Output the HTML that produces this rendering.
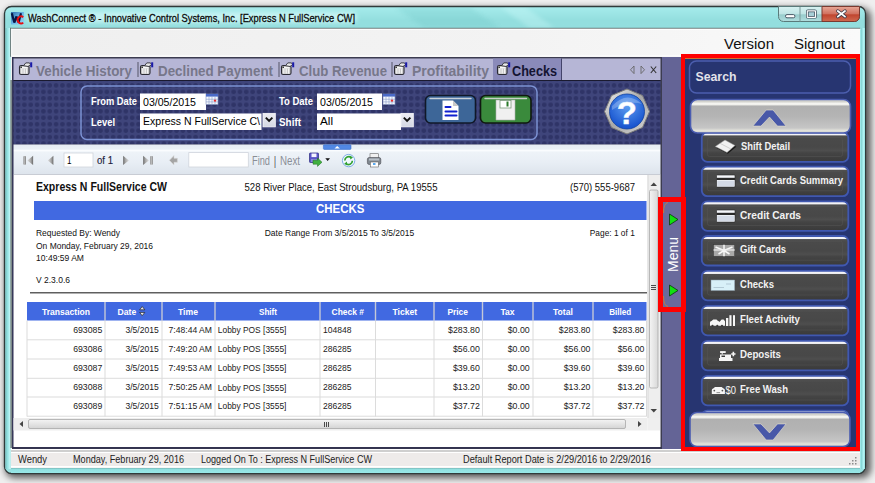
<!DOCTYPE html>
<html><head><meta charset="utf-8"><title>WashConnect</title>
<style>html,body{margin:0;padding:0;background:#ececec;width:875px;height:483px;overflow:hidden;font-family:"Liberation Sans",sans-serif}svg{display:block}</style>
</head><body><svg width="875" height="483" viewBox="0 0 875 483" font-family="Liberation Sans, sans-serif"><defs>
<linearGradient id="bgshadow" x1="0" y1="0" x2="0" y2="1"><stop offset="0" stop-color="#f2f2f2"/><stop offset="1" stop-color="#e6e6e6"/></linearGradient>
<clipPath id="titleclip"><rect x="5" y="7.5" width="860" height="20.5"/></clipPath>
<linearGradient id="menubg" x1="0" y1="0" x2="1" y2="0"><stop offset="0" stop-color="#efefef"/><stop offset="0.6" stop-color="#f3f3f3"/><stop offset="1" stop-color="#fafafa"/></linearGradient>
<filter id="glow" x="-10%" y="-50%" width="120%" height="200%"><feGaussianBlur stdDeviation="2"/></filter>
<filter id="shadow" x="-5%" y="-5%" width="110%" height="110%"><feGaussianBlur stdDeviation="3.5"/></filter>
<linearGradient id="leftframe" x1="0" y1="0" x2="1" y2="0"><stop offset="0" stop-color="#78b0b0"/><stop offset="0.3" stop-color="#8adcdc"/><stop offset="0.6" stop-color="#a8ecec"/><stop offset="0.85" stop-color="#c8f8f8"/><stop offset="1" stop-color="#b0e0e0"/></linearGradient>
<linearGradient id="rightframe" x1="0" y1="0" x2="1" y2="0"><stop offset="0" stop-color="#a8f0f0"/><stop offset="0.3" stop-color="#88d8d8"/><stop offset="0.7" stop-color="#b0f4f4"/><stop offset="1" stop-color="#98e0e0"/></linearGradient>
<linearGradient id="bottomframe" x1="0" y1="0" x2="0" y2="1"><stop offset="0" stop-color="#7ab8b8"/><stop offset="0.3" stop-color="#90e0e0"/><stop offset="1" stop-color="#98e8e8"/></linearGradient>
<linearGradient id="cyan" x1="0" y1="0" x2="0" y2="1"><stop offset="0" stop-color="#a6ecec"/><stop offset="0.03" stop-color="#93dede"/><stop offset="1" stop-color="#98e2e2"/></linearGradient>
<pattern id="dots" x="14.89" y="82.165" width="6.34" height="6.47" patternUnits="userSpaceOnUse"><rect width="6.34" height="6.47" fill="#3f457b"/><circle cx="3.17" cy="3.235" r="2.3" fill="#2f3467"/></pattern>
<linearGradient id="toolbar" x1="0" y1="0" x2="0" y2="1"><stop offset="0" stop-color="#e6ecf4"/><stop offset="0.15" stop-color="#eaf0f6"/><stop offset="0.2" stop-color="#fafcfe"/><stop offset="0.26" stop-color="#eef3f8"/><stop offset="0.6" stop-color="#e8eef5"/><stop offset="1" stop-color="#dde4ec"/></linearGradient>
<linearGradient id="graybtn" x1="0" y1="0" x2="0" y2="1"><stop offset="0" stop-color="#d8d8d0"/><stop offset="0.08" stop-color="#d0d0cc"/><stop offset="0.1" stop-color="#f6f6f2"/><stop offset="0.15" stop-color="#f0f0ec"/><stop offset="0.2" stop-color="#b0b0b0"/><stop offset="0.5" stop-color="#b4b4b4"/><stop offset="0.85" stop-color="#c6c6c6"/><stop offset="0.93" stop-color="#e4e4dc"/><stop offset="1" stop-color="#c8c8c8"/></linearGradient>
<linearGradient id="darkbtn" x1="0" y1="0" x2="0" y2="1"><stop offset="0" stop-color="#ffffff"/><stop offset="0.08" stop-color="#f0f0f0"/><stop offset="0.12" stop-color="#3a3a3a"/><stop offset="0.55" stop-color="#474747"/><stop offset="0.6" stop-color="#3b3b3b"/><stop offset="1" stop-color="#3a3a3a"/></linearGradient>
<linearGradient id="closebtn" x1="0" y1="0" x2="0" y2="1"><stop offset="0" stop-color="#e8a898"/><stop offset="0.5" stop-color="#d0705e"/><stop offset="0.55" stop-color="#c0452e"/><stop offset="1" stop-color="#d06a50"/></linearGradient>
<linearGradient id="capbtn" x1="0" y1="0" x2="0" y2="1"><stop offset="0" stop-color="#d8f2f2"/><stop offset="0.5" stop-color="#bfe4e4"/><stop offset="0.55" stop-color="#98cccc"/><stop offset="1" stop-color="#b0dede"/></linearGradient>
<linearGradient id="bluebtn" x1="0" y1="0" x2="0" y2="1"><stop offset="0" stop-color="#6a8cc0"/><stop offset="0.5" stop-color="#4a6ea6"/><stop offset="1" stop-color="#3a5a90"/></linearGradient>
<linearGradient id="greenbtn" x1="0" y1="0" x2="0" y2="1"><stop offset="0" stop-color="#7ab87a"/><stop offset="0.5" stop-color="#4a9a4a"/><stop offset="1" stop-color="#3a8a3a"/></linearGradient>
<linearGradient id="scrollthumbV" x1="0" y1="0" x2="1" y2="0"><stop offset="0" stop-color="#f4f4f4"/><stop offset="1" stop-color="#d8d8d8"/></linearGradient>
<linearGradient id="scrollthumbH" x1="0" y1="0" x2="0" y2="1"><stop offset="0" stop-color="#f4f4f4"/><stop offset="1" stop-color="#d4d4d4"/></linearGradient>
<radialGradient id="helpblue" cx="0.5" cy="0.35" r="0.6"><stop offset="0" stop-color="#5c9cf0"/><stop offset="1" stop-color="#1a56d0"/></radialGradient>
<linearGradient id="silver" x1="0" y1="0" x2="1" y2="1"><stop offset="0" stop-color="#f0f0f0"/><stop offset="0.5" stop-color="#a8a8a8"/><stop offset="1" stop-color="#d8d8d8"/></linearGradient>
<linearGradient id="icog" x1="0" y1="0" x2="1" y2="1"><stop offset="0" stop-color="#2a6aa8"/><stop offset="0.5" stop-color="#6ab8e8"/><stop offset="1" stop-color="#9ad8f4"/></linearGradient><linearGradient id="ddg" x1="0" y1="0" x2="0" y2="1"><stop offset="0" stop-color="#ececf2"/><stop offset="1" stop-color="#d4d8e4"/></linearGradient><linearGradient id="navg" x1="0" y1="0" x2="1" y2="0"><stop offset="0" stop-color="#dcdcdc"/><stop offset="0.6" stop-color="#a8a8a8"/><stop offset="1" stop-color="#6a6a6a"/></linearGradient><linearGradient id="navgr" x1="1" y1="0" x2="0" y2="0"><stop offset="0" stop-color="#dcdcdc"/><stop offset="0.6" stop-color="#a8a8a8"/><stop offset="1" stop-color="#6a6a6a"/></linearGradient><linearGradient id="navbar" x1="0" y1="0" x2="1" y2="0"><stop offset="0" stop-color="#8a8a8a"/><stop offset="0.5" stop-color="#b8b8b8"/><stop offset="1" stop-color="#7a7a7a"/></linearGradient><linearGradient id="dkb" x1="0" y1="0" x2="0" y2="1"><stop offset="0" stop-color="#f0f0f4"/><stop offset="0.09" stop-color="#f4f4f8"/><stop offset="0.12" stop-color="#505050"/><stop offset="0.2" stop-color="#4a4a4a"/><stop offset="0.5" stop-color="#484848"/><stop offset="0.62" stop-color="#4e4e4e"/><stop offset="0.7" stop-color="#444"/><stop offset="1" stop-color="#3a3a3a"/></linearGradient></defs><rect x="0" y="0" width="875" height="483" fill="#efefef" /><rect x="5" y="8" width="866" height="470" rx="9" fill="#000" filter="url(#shadow)" opacity="0.62"/><rect x="4.5" y="6.5" width="861" height="467" rx="7" fill="url(#cyan)" stroke="#303a3a" stroke-width="1.3"/><g clip-path="url(#titleclip)"><path d="M395 7 L470 7 L500 28 L425 28 Z" fill="#5ab8b8" opacity="0.18" filter="url(#glow)"/><path d="M500 7 L525 7 L555 28 L530 28 Z" fill="#d8ffff" opacity="0.3" filter="url(#glow)"/></g><rect x="5.2" y="28" width="5.8" height="441" fill="url(#leftframe)"/><rect x="860" y="28" width="5" height="441" fill="url(#rightframe)"/><rect x="11" y="468" width="849" height="5" fill="url(#bottomframe)"/><rect x="11" y="12" width="13" height="12.5" fill="url(#icog)"/><path d="M11.8 13.2 L14.3 22.5 L16.5 16.5 L18.6 22.5 L21 13.2" stroke="#061848" stroke-width="2.2" fill="none" stroke-linejoin="bevel"/><path d="M23.2 17.2 A3.3 3.6 0 1 0 23.2 22.6" stroke="#e81010" stroke-width="2" fill="none"/><rect x="27" y="12" width="330" height="11" rx="5" fill="#e8ffff" opacity="0.55" filter="url(#glow)"/><text x="28" y="21.5" font-size="11.2" font-weight="400" fill="#0a0a0a" text-anchor="start" textLength="327" lengthAdjust="spacingAndGlyphs" stroke="#0a0a0a" stroke-width="0.3">WashConnect ® - Innovative Control Systems, Inc. [Express N FullService CW]</text><path d="M778.5 6.5 h81 v10 a5 5 0 0 1 -5 5 h-71 a5 5 0 0 1 -5 -5 z" fill="url(#capbtn)" stroke="#5a7a7a" stroke-width="1"/><path d="M822 6.5 h37.5 v10 a5 5 0 0 1 -5 5 h-32.5 z" fill="url(#closebtn)" stroke="#7a3a30" stroke-width="1"/><line x1="800" y1="7" x2="800" y2="21.5" stroke="#7a9a9a" stroke-width="1"/><rect x="785.5" y="14.6" width="9.4" height="3.2" rx="1.5" fill="#fff" stroke="#3a4a58" stroke-width="0.9"/><rect x="807.3" y="10.9" width="8.2" height="6.4" rx="0.6" fill="#a8d0d8" stroke="#3a4a58" stroke-width="2.6"/><rect x="807.3" y="10.9" width="8.2" height="6.4" rx="0.4" fill="none" stroke="#fff" stroke-width="1.2"/><path d="M837.8 11 L845 16.6 M845 11 L837.8 16.6" stroke="#3a3a4a" stroke-width="3.4" stroke-linecap="round"/><path d="M837.8 11 L845 16.6 M845 11 L837.8 16.6" stroke="#fff" stroke-width="1.8" stroke-linecap="round"/><rect x="11" y="28" width="849" height="440" fill="#f0f0f0" /><rect x="11" y="28" width="849" height="28" fill="url(#menubg)" /><rect x="10.2" y="27.8" width="850" height="1" fill="#5e6a6a" /><rect x="10.2" y="27.8" width="1" height="29" fill="#5e6a6a" /><rect x="11.2" y="28.8" width="849" height="1" fill="#ffffff" /><rect x="11.2" y="28.8" width="1" height="27" fill="#ffffff" /><text x="724" y="48.5" font-size="14" font-weight="400" fill="#111" text-anchor="start" textLength="50" lengthAdjust="spacingAndGlyphs" >Version</text><text x="794" y="48.5" font-size="14" font-weight="400" fill="#111" text-anchor="start" textLength="51" lengthAdjust="spacingAndGlyphs" >Signout</text><rect x="11" y="448.5" width="849" height="19.5" fill="#eeebea" /><rect x="11" y="448.5" width="849" height="1.5" fill="#ffffff" /><rect x="11" y="450" width="849" height="2" fill="#cfcfcf" /><rect x="11" y="452" width="849" height="1" fill="#ffffff" /><rect x="11" y="466" width="849" height="1.5" fill="#ffffff" /><text x="18" y="463" font-size="10" font-weight="400" fill="#222" text-anchor="start" textLength="29" lengthAdjust="spacingAndGlyphs" >Wendy</text><text x="73" y="463" font-size="10" font-weight="400" fill="#222" text-anchor="start" textLength="111" lengthAdjust="spacingAndGlyphs" >Monday, February 29, 2016</text><text x="201" y="463" font-size="10" font-weight="400" fill="#222" text-anchor="start" textLength="171" lengthAdjust="spacingAndGlyphs" >Logged On To : Express N FullService CW</text><text x="463" y="463" font-size="10" font-weight="400" fill="#222" text-anchor="start" textLength="188" lengthAdjust="spacingAndGlyphs" >Default Report Date is 2/29/2016 to 2/29/2016</text><rect x="855" y="457" width="1.5" height="1.5" fill="#8a8a8a" /><rect x="852" y="460" width="1.5" height="1.5" fill="#8a8a8a" /><rect x="855" y="460" width="1.5" height="1.5" fill="#8a8a8a" /><rect x="849" y="463" width="1.5" height="1.5" fill="#8a8a8a" /><rect x="852" y="463" width="1.5" height="1.5" fill="#8a8a8a" /><rect x="855" y="463" width="1.5" height="1.5" fill="#8a8a8a" /><rect x="12" y="57" width="650" height="392" fill="#3c3c50" /><rect x="10.3" y="80" width="2" height="368" fill="#7e8a8a" /><rect x="12.3" y="57" width="1.5" height="391" fill="#2e2e56" /><rect x="13.5" y="58.5" width="647" height="21.5" fill="#b6b6d6" /><rect x="493" y="58.5" width="68" height="21.5" fill="#8a8aba" /><rect x="561" y="58.5" width="1" height="21.5" fill="#44446a" /><g transform="translate(19,63.5)"><rect x="0.5" y="2" width="9.5" height="9" rx="1.6" fill="#c8c8c8" stroke="#2a2a34" stroke-width="1.1"/><path d="M2 4.2 h6.5" stroke="#f8f8f8" stroke-width="1.4"/><path d="M2.8 5 v5 M5.2 5 v5 M7.6 5 v5" stroke="#f4f4f4" stroke-width="1.2"/><circle cx="2.2" cy="3.8" r="0.8" fill="#111"/><path d="M4.5 2.2 L6.8 -0.6 H10.5 L11.5 1.2 L9 3 Z" fill="#e8e8e8" stroke="#303038" stroke-width="0.9"/><rect x="11.2" y="-1.2" width="2" height="5" fill="#1a1aa8"/></g><text x="36" y="75.5" font-size="14" font-weight="700" fill="#77778a" text-anchor="start" textLength="96" lengthAdjust="spacingAndGlyphs" >Vehicle History</text><rect x="137.5" y="62" width="1" height="15" fill="#555566" /><g transform="translate(140,63.5)"><rect x="0.5" y="2" width="9.5" height="9" rx="1.6" fill="#c8c8c8" stroke="#2a2a34" stroke-width="1.1"/><path d="M2 4.2 h6.5" stroke="#f8f8f8" stroke-width="1.4"/><path d="M2.8 5 v5 M5.2 5 v5 M7.6 5 v5" stroke="#f4f4f4" stroke-width="1.2"/><circle cx="2.2" cy="3.8" r="0.8" fill="#111"/><path d="M4.5 2.2 L6.8 -0.6 H10.5 L11.5 1.2 L9 3 Z" fill="#e8e8e8" stroke="#303038" stroke-width="0.9"/><rect x="11.2" y="-1.2" width="2" height="5" fill="#1a1aa8"/></g><text x="158" y="75.5" font-size="14" font-weight="700" fill="#77778a" text-anchor="start" textLength="115" lengthAdjust="spacingAndGlyphs" >Declined Payment</text><rect x="278.5" y="62" width="1" height="15" fill="#555566" /><g transform="translate(281,63.5)"><rect x="0.5" y="2" width="9.5" height="9" rx="1.6" fill="#c8c8c8" stroke="#2a2a34" stroke-width="1.1"/><path d="M2 4.2 h6.5" stroke="#f8f8f8" stroke-width="1.4"/><path d="M2.8 5 v5 M5.2 5 v5 M7.6 5 v5" stroke="#f4f4f4" stroke-width="1.2"/><circle cx="2.2" cy="3.8" r="0.8" fill="#111"/><path d="M4.5 2.2 L6.8 -0.6 H10.5 L11.5 1.2 L9 3 Z" fill="#e8e8e8" stroke="#303038" stroke-width="0.9"/><rect x="11.2" y="-1.2" width="2" height="5" fill="#1a1aa8"/></g><text x="299" y="75.5" font-size="14" font-weight="700" fill="#77778a" text-anchor="start" textLength="88" lengthAdjust="spacingAndGlyphs" >Club Revenue</text><rect x="391.5" y="62" width="1" height="15" fill="#555566" /><g transform="translate(394,63.5)"><rect x="0.5" y="2" width="9.5" height="9" rx="1.6" fill="#c8c8c8" stroke="#2a2a34" stroke-width="1.1"/><path d="M2 4.2 h6.5" stroke="#f8f8f8" stroke-width="1.4"/><path d="M2.8 5 v5 M5.2 5 v5 M7.6 5 v5" stroke="#f4f4f4" stroke-width="1.2"/><circle cx="2.2" cy="3.8" r="0.8" fill="#111"/><path d="M4.5 2.2 L6.8 -0.6 H10.5 L11.5 1.2 L9 3 Z" fill="#e8e8e8" stroke="#303038" stroke-width="0.9"/><rect x="11.2" y="-1.2" width="2" height="5" fill="#1a1aa8"/></g><text x="412" y="75.5" font-size="14" font-weight="700" fill="#77778a" text-anchor="start" textLength="77" lengthAdjust="spacingAndGlyphs" >Profitability</text><g transform="translate(497,63.5)"><rect x="0.5" y="2" width="9.5" height="9" rx="1.6" fill="#c8c8c8" stroke="#2a2a34" stroke-width="1.1"/><path d="M2 4.2 h6.5" stroke="#f8f8f8" stroke-width="1.4"/><path d="M2.8 5 v5 M5.2 5 v5 M7.6 5 v5" stroke="#f4f4f4" stroke-width="1.2"/><circle cx="2.2" cy="3.8" r="0.8" fill="#111"/><path d="M4.5 2.2 L6.8 -0.6 H10.5 L11.5 1.2 L9 3 Z" fill="#e8e8e8" stroke="#303038" stroke-width="0.9"/><rect x="11.2" y="-1.2" width="2" height="5" fill="#1a1aa8"/></g><text x="512" y="75.5" font-size="14" font-weight="700" fill="#141432" text-anchor="start" textLength="45" lengthAdjust="spacingAndGlyphs" >Checks</text><path d="M634 66 L630.5 69.8 L634 73.6 Z" fill="none" stroke="#666" stroke-width="0.9"/><path d="M641 66 L644.5 69.8 L641 73.6 Z" fill="none" stroke="#666" stroke-width="0.9"/><path d="M650.8 66.5 L656.2 73 M656.2 66.5 L650.8 73" stroke="#333" stroke-width="1.1"/><rect x="11" y="55.5" width="849" height="1" fill="#ffffff" /><rect x="13.5" y="80" width="647" height="1" fill="#1a1a30" /><rect x="13.5" y="81" width="647" height="63.5" fill="url(#dots)" /><rect x="81" y="86" width="456" height="53.5" rx="6" fill="none" stroke="#7c92d4" stroke-width="1.5"/><text x="91" y="105" font-size="11" font-weight="700" fill="#fff" text-anchor="start" textLength="46" lengthAdjust="spacingAndGlyphs" >From Date</text><text x="91" y="125.5" font-size="11" font-weight="700" fill="#fff" text-anchor="start" textLength="24" lengthAdjust="spacingAndGlyphs" >Level</text><text x="279" y="105" font-size="11" font-weight="700" fill="#fff" text-anchor="start" textLength="34" lengthAdjust="spacingAndGlyphs" >To Date</text><text x="279" y="125.5" font-size="11" font-weight="700" fill="#fff" text-anchor="start" textLength="22" lengthAdjust="spacingAndGlyphs" >Shift</text><rect x="140" y="93.5" width="66" height="16.5" fill="#fff" /><text x="143" y="105.6" font-size="11.5" font-weight="400" fill="#000" text-anchor="start" textLength="53" lengthAdjust="spacingAndGlyphs" >03/05/2015</text><rect x="140" y="113.5" width="121.5" height="16.5" fill="#fff" /><text x="143" y="125.2" font-size="11.5" font-weight="400" fill="#000" text-anchor="start" textLength="117" lengthAdjust="spacingAndGlyphs" >Express N FullService C\</text><rect x="317" y="93.5" width="65" height="16.5" fill="#fff" /><text x="320" y="105.6" font-size="11.5" font-weight="400" fill="#000" text-anchor="start" textLength="53" lengthAdjust="spacingAndGlyphs" >03/05/2015</text><rect x="317" y="113.5" width="84" height="16.5" fill="#fff" /><text x="320" y="125.2" font-size="11.5" font-weight="400" fill="#000" text-anchor="start" textLength="13" lengthAdjust="spacingAndGlyphs" >All</text><rect x="263.0" y="113.4" width="12.3" height="13.4" fill="url(#ddg)" stroke="#f4f4f8" stroke-width="0.9"/><path d="M265.8 117.60000000000001 L269.1 121.0 L272.4 117.60000000000001" fill="none" stroke="#111" stroke-width="1.9"/><rect x="401.0" y="113.4" width="12.3" height="13.4" fill="url(#ddg)" stroke="#f4f4f8" stroke-width="0.9"/><path d="M403.8 117.60000000000001 L407.1 121.0 L410.4 117.60000000000001" fill="none" stroke="#111" stroke-width="1.9"/><rect x="206" y="94" width="12" height="10.5" fill="#f4f8ff" stroke="#7a8ab8" stroke-width="0.6"/><rect x="206" y="94" width="12" height="2.6" fill="#4a6ac8"/><line x1="209" y1="96.6" x2="209" y2="104.5" stroke="#8a9ac8" stroke-width="0.6"/><line x1="212" y1="96.6" x2="212" y2="104.5" stroke="#8a9ac8" stroke-width="0.6"/><line x1="215" y1="96.6" x2="215" y2="104.5" stroke="#8a9ac8" stroke-width="0.6"/><line x1="206" y1="99.25" x2="218" y2="99.25" stroke="#8a9ac8" stroke-width="0.6"/><line x1="206" y1="101.89999999999999" x2="218" y2="101.89999999999999" stroke="#8a9ac8" stroke-width="0.6"/><circle cx="215" cy="100.6" r="1.2" fill="#e83030"/><rect x="383" y="94" width="12" height="10.5" fill="#f4f8ff" stroke="#7a8ab8" stroke-width="0.6"/><rect x="383" y="94" width="12" height="2.6" fill="#4a6ac8"/><line x1="386" y1="96.6" x2="386" y2="104.5" stroke="#8a9ac8" stroke-width="0.6"/><line x1="389" y1="96.6" x2="389" y2="104.5" stroke="#8a9ac8" stroke-width="0.6"/><line x1="392" y1="96.6" x2="392" y2="104.5" stroke="#8a9ac8" stroke-width="0.6"/><line x1="383" y1="99.25" x2="395" y2="99.25" stroke="#8a9ac8" stroke-width="0.6"/><line x1="383" y1="101.89999999999999" x2="395" y2="101.89999999999999" stroke="#8a9ac8" stroke-width="0.6"/><circle cx="392" cy="100.6" r="1.2" fill="#e83030"/><rect x="425.5" y="95.5" width="50" height="27.5" rx="5" fill="#3d6698" stroke="#101828" stroke-width="1.6"/><path d="M430 98.5 H471" stroke="#c8d0d8" stroke-width="1.4" stroke-linecap="round"/><path d="M442.5 100.5 h10.5 l5.5 5.5 v14 h-16 z" fill="#ffffff"/><path d="M453 100.5 v5.5 h5.5 z" fill="#c8c8c8"/><path d="M445.5 107 h5 M445.5 111.5 h11 M445.5 115.5 h11" stroke="#1020d0" stroke-width="2" stroke-linecap="round"/><rect x="480.5" y="95.5" width="50.5" height="27.5" rx="5" fill="#3a8a3c" stroke="#101810" stroke-width="1.6"/><path d="M485 98.5 H526.5" stroke="#c8d0c8" stroke-width="1.4" stroke-linecap="round"/><path d="M496 100 h19 v20 h-19 z" fill="#f0f0f0" stroke="#b0b0b0" stroke-width="0.6"/><rect x="500" y="100.5" width="11" height="7.5" fill="#fff" stroke="#7a9a7a" stroke-width="0.8"/><rect x="506.5" y="101.5" width="2" height="5" fill="#2a7a2a"/><path d="M627 89 L642.5 95.5 L649.5 111.5 L642.5 127.5 L627 134 L611.5 127.5 L604.5 111.5 L611.5 95.5 Z" fill="url(#silver)" stroke="#7a7a7a" stroke-width="1"/><circle cx="627" cy="111.5" r="17.5" fill="url(#helpblue)" stroke="#1040a0" stroke-width="0.8"/><path d="M612 106 Q627 90 642 104 Q628 100 612 110 Z" fill="#ffffff" opacity="0.25"/><text x="616.8" y="124.2" font-size="31" font-weight="700" fill="#fff" text-anchor="start" textLength="20.2" lengthAdjust="spacingAndGlyphs" stroke="#e8f0ff" stroke-width="0.4">?</text><rect x="13.5" y="144.5" width="647" height="30" fill="url(#toolbar)" /><rect x="13.5" y="174" width="647" height="1" fill="#c8ccd4" /><rect x="323.4" y="144.8" width="27.6" height="4.6" rx="0.8" fill="#5288e4" stroke="#3a70d0" stroke-width="0.6"/><path d="M334.5 148.6 L337.2 146 L339.9 148.6 Z" fill="#fff"/><rect x="23.4" y="156" width="2.6" height="8.8" rx="0.8" fill="url(#navbar)"/><path d="M33.1 155.8 L27.4 160.4 L33.1 165 Z" fill="url(#navg)"/><path d="M53.4 155.8 L47.8 160.4 L53.4 165 Z" fill="url(#navg)"/><rect x="64" y="153" width="29" height="14" fill="#fff" stroke="#d0d4dc" stroke-width="0.8"/><text x="67" y="164" font-size="11" font-weight="400" fill="#000" text-anchor="start" textLength="4.5" lengthAdjust="spacingAndGlyphs" >1</text><text x="97" y="163.8" font-size="11" font-weight="400" fill="#1a1a3a" text-anchor="start" textLength="16" lengthAdjust="spacingAndGlyphs" stroke="#1a1a3a" stroke-width="0.15">of 1</text><path d="M123.1 155.8 L128.9 160.4 L123.1 165 Z" fill="url(#navgr)"/><path d="M143.1 155.8 L148.9 160.4 L143.1 165 Z" fill="url(#navgr)"/><rect x="150.2" y="156" width="2.6" height="8.8" rx="0.8" fill="url(#navbar)"/><path d="M169.4 160.3 L174 155.6 V158.3 H177.4 V162.3 H174 V165 Z" fill="#a4a4a4" stroke="#d8d8d8" stroke-width="0.6"/><rect x="188.8" y="152.6" width="59.5" height="14.4" fill="#fff" stroke="#d0d4dc" stroke-width="0.8"/><text x="252" y="164.5" font-size="12" font-weight="400" fill="#8a8e96" text-anchor="start" textLength="18" lengthAdjust="spacingAndGlyphs" >Find</text><text x="274" y="164.5" font-size="12" font-weight="400" fill="#333" text-anchor="start" textLength="2" lengthAdjust="spacingAndGlyphs" >|</text><text x="280" y="164.5" font-size="12" font-weight="400" fill="#8a8e96" text-anchor="start" textLength="20" lengthAdjust="spacingAndGlyphs" >Next</text><rect x="309.5" y="153" width="9" height="9.5" rx="0.8" fill="#5a54c8" stroke="#2a2a80" stroke-width="0.7"/><rect x="311.5" y="153.5" width="5" height="3.6" fill="#f4f4ff"/><rect x="311" y="159" width="6" height="3" fill="#8a8ad8"/><path d="M313 160.2 L317.5 160.2 L317.5 158 L322 162.2 L317.5 166.4 L317.5 164.2 L313 164.2 Z" fill="#40b040" stroke="#207020" stroke-width="0.5"/><path d="M325.3 158.2 L330 158.2 L327.65 161 Z" fill="#111"/><circle cx="348.6" cy="160.6" r="6.2" fill="#f0f8ff" stroke="#70a4e0" stroke-width="0.9"/><path d="M344.8 160.5 A3.9 3.9 0 0 1 351.2 157.6" fill="none" stroke="#30a030" stroke-width="1.7"/><path d="M350 155.8 L353 157.5 L350.3 159.6 Z" fill="#30a030"/><path d="M352.4 160.7 A3.9 3.9 0 0 1 346 163.6" fill="none" stroke="#30a030" stroke-width="1.7"/><path d="M347.2 165.4 L344.2 163.7 L346.9 161.6 Z" fill="#30a030"/><rect x="370" y="153.7" width="8.5" height="5" fill="#f0f0f0" stroke="#666" stroke-width="0.6"/><rect x="367.4" y="157.5" width="13.4" height="7" rx="1.8" fill="#808890" stroke="#4a4a50" stroke-width="0.6"/><rect x="369" y="158.5" width="10.2" height="2" fill="#b8c0c8"/><rect x="370.3" y="162" width="8" height="5" fill="#ffffff" stroke="#666" stroke-width="0.6"/><rect x="373" y="163" width="2.5" height="2" fill="#5aaaf0"/><rect x="13.5" y="175" width="647" height="272" fill="#ffffff" /><rect x="12" y="447.3" width="650" height="1.2" fill="#303050" /><text x="36" y="191" font-size="12" font-weight="700" fill="#111" text-anchor="start" textLength="131" lengthAdjust="spacingAndGlyphs" >Express N FullService CW</text><text x="244.5" y="190.5" font-size="10.4" font-weight="400" fill="#111" text-anchor="start" textLength="193" lengthAdjust="spacingAndGlyphs" >528 River Place, East Stroudsburg, PA 19555</text><text x="570" y="190.5" font-size="11" font-weight="400" fill="#111" text-anchor="start" textLength="65" lengthAdjust="spacingAndGlyphs" >(570) 555-9687</text><rect x="34" y="201" width="612.5" height="19" fill="#4169e1" /><text x="316" y="212.8" font-size="12" font-weight="700" fill="#fff" text-anchor="start" textLength="48.5" lengthAdjust="spacingAndGlyphs" >CHECKS</text><text x="36" y="236" font-size="9" font-weight="400" fill="#111" text-anchor="start" textLength="84" lengthAdjust="spacingAndGlyphs" >Requested By: Wendy</text><text x="36" y="248.8" font-size="9" font-weight="400" fill="#111" text-anchor="start" textLength="117" lengthAdjust="spacingAndGlyphs" >On Monday, February 29, 2016</text><text x="36" y="261.2" font-size="9" font-weight="400" fill="#111" text-anchor="start" textLength="48" lengthAdjust="spacingAndGlyphs" >10:49:59 AM</text><text x="36" y="282.8" font-size="9" font-weight="400" fill="#111" text-anchor="start" textLength="34" lengthAdjust="spacingAndGlyphs" >V 2.3.0.6</text><text x="264.7" y="236" font-size="9" font-weight="400" fill="#111" text-anchor="start" textLength="149.6" lengthAdjust="spacingAndGlyphs" >Date Range From 3/5/2015 To 3/5/2015</text><text x="589.8" y="236" font-size="9" font-weight="400" fill="#111" text-anchor="start" textLength="45" lengthAdjust="spacingAndGlyphs" >Page: 1 of 1</text><rect x="30" y="292.2" width="617" height="1.2" fill="#383838" /><rect x="27" y="302" width="619.5" height="18.5" fill="#4169e1" /><rect x="104.3" y="302" width="1.4" height="18.5" fill="#c4c8d8" /><rect x="161.3" y="302" width="1.4" height="18.5" fill="#c4c8d8" /><rect x="214.3" y="302" width="1.4" height="18.5" fill="#c4c8d8" /><rect x="319.3" y="302" width="1.4" height="18.5" fill="#c4c8d8" /><rect x="374.8" y="302" width="1.4" height="18.5" fill="#c4c8d8" /><rect x="433.3" y="302" width="1.4" height="18.5" fill="#c4c8d8" /><rect x="481.8" y="302" width="1.4" height="18.5" fill="#c4c8d8" /><rect x="532.3" y="302" width="1.4" height="18.5" fill="#c4c8d8" /><rect x="592.3" y="302" width="1.4" height="18.5" fill="#c4c8d8" /><text x="42" y="314.6" font-size="9.2" font-weight="700" fill="#fff" text-anchor="start" textLength="48" lengthAdjust="spacingAndGlyphs" >Transaction</text><text x="117.6" y="314.6" font-size="9.2" font-weight="700" fill="#fff" text-anchor="start" textLength="18.7" lengthAdjust="spacingAndGlyphs" >Date</text><text x="178" y="314.6" font-size="9.2" font-weight="700" fill="#fff" text-anchor="start" textLength="20" lengthAdjust="spacingAndGlyphs" >Time</text><text x="259" y="314.6" font-size="9.2" font-weight="700" fill="#fff" text-anchor="start" textLength="18" lengthAdjust="spacingAndGlyphs" >Shift</text><text x="331.6" y="314.6" font-size="9.2" font-weight="700" fill="#fff" text-anchor="start" textLength="32.4" lengthAdjust="spacingAndGlyphs" >Check #</text><text x="392.5" y="314.6" font-size="9.2" font-weight="700" fill="#fff" text-anchor="start" textLength="24.7" lengthAdjust="spacingAndGlyphs" >Ticket</text><text x="447.4" y="314.6" font-size="9.2" font-weight="700" fill="#fff" text-anchor="start" textLength="20.6" lengthAdjust="spacingAndGlyphs" >Price</text><text x="500.4" y="314.6" font-size="9.2" font-weight="700" fill="#fff" text-anchor="start" textLength="14.2" lengthAdjust="spacingAndGlyphs" >Tax</text><text x="553" y="314.6" font-size="9.2" font-weight="700" fill="#fff" text-anchor="start" textLength="19.8" lengthAdjust="spacingAndGlyphs" >Total</text><text x="609.2" y="314.6" font-size="9.2" font-weight="700" fill="#fff" text-anchor="start" textLength="22" lengthAdjust="spacingAndGlyphs" >Billed</text><path d="M139.6 309.8 L142.2 306.5 L144.8 309.8 Z M139.6 312.4 L142.2 315.7 L144.8 312.4 Z" fill="#e8e8e8" stroke="#222" stroke-width="0.7"/><text x="102.3" y="332.7" font-size="9.2" font-weight="400" fill="#1a1a1a" text-anchor="end" transform="translate(102.3,0) scale(0.95,1) translate(-102.3,0)">693085</text><text x="158.7" y="332.7" font-size="9.2" font-weight="400" fill="#1a1a1a" text-anchor="end" transform="translate(158.7,0) scale(0.93,1) translate(-158.7,0)">3/5/2015</text><text x="212" y="332.7" font-size="9.2" font-weight="400" fill="#1a1a1a" text-anchor="end" transform="translate(212,0) scale(0.935,1) translate(-212,0)">7:48:44 AM</text><text x="217.8" y="332.7" font-size="9.2" font-weight="400" fill="#1a1a1a" text-anchor="start" textLength="68.6" lengthAdjust="spacingAndGlyphs" >Lobby POS [3555]</text><text x="322.9" y="332.7" font-size="9.2" font-weight="400" fill="#1a1a1a" text-anchor="start" transform="translate(322.9,0) scale(0.93,1) translate(-322.9,0)">104848</text><text x="479.8" y="332.7" font-size="9.2" font-weight="400" fill="#1a1a1a" text-anchor="end" transform="translate(479.8,0) scale(0.955,1) translate(-479.8,0)">$283.80</text><text x="529.7" y="332.7" font-size="9.2" font-weight="400" fill="#1a1a1a" text-anchor="end" transform="translate(529.7,0) scale(0.955,1) translate(-529.7,0)">$0.00</text><text x="590.5" y="332.7" font-size="9.2" font-weight="400" fill="#1a1a1a" text-anchor="end" transform="translate(590.5,0) scale(0.955,1) translate(-590.5,0)">$283.80</text><text x="644.5" y="332.7" font-size="9.2" font-weight="400" fill="#1a1a1a" text-anchor="end" transform="translate(644.5,0) scale(0.955,1) translate(-644.5,0)">$283.80</text><rect x="27" y="339.3" width="619.5" height="1" fill="#dcdcdc" /><text x="102.3" y="352.0" font-size="9.2" font-weight="400" fill="#1a1a1a" text-anchor="end" transform="translate(102.3,0) scale(0.95,1) translate(-102.3,0)">693086</text><text x="158.7" y="352.0" font-size="9.2" font-weight="400" fill="#1a1a1a" text-anchor="end" transform="translate(158.7,0) scale(0.93,1) translate(-158.7,0)">3/5/2015</text><text x="212" y="352.0" font-size="9.2" font-weight="400" fill="#1a1a1a" text-anchor="end" transform="translate(212,0) scale(0.935,1) translate(-212,0)">7:49:20 AM</text><text x="217.8" y="352.0" font-size="9.2" font-weight="400" fill="#1a1a1a" text-anchor="start" textLength="68.6" lengthAdjust="spacingAndGlyphs" >Lobby POS [3555]</text><text x="322.9" y="352.0" font-size="9.2" font-weight="400" fill="#1a1a1a" text-anchor="start" transform="translate(322.9,0) scale(0.93,1) translate(-322.9,0)">286285</text><text x="479.8" y="352.0" font-size="9.2" font-weight="400" fill="#1a1a1a" text-anchor="end" transform="translate(479.8,0) scale(0.955,1) translate(-479.8,0)">$56.00</text><text x="529.7" y="352.0" font-size="9.2" font-weight="400" fill="#1a1a1a" text-anchor="end" transform="translate(529.7,0) scale(0.955,1) translate(-529.7,0)">$0.00</text><text x="590.5" y="352.0" font-size="9.2" font-weight="400" fill="#1a1a1a" text-anchor="end" transform="translate(590.5,0) scale(0.955,1) translate(-590.5,0)">$56.00</text><text x="644.5" y="352.0" font-size="9.2" font-weight="400" fill="#1a1a1a" text-anchor="end" transform="translate(644.5,0) scale(0.955,1) translate(-644.5,0)">$56.00</text><rect x="27" y="358.5" width="619.5" height="1" fill="#dcdcdc" /><text x="102.3" y="371.2" font-size="9.2" font-weight="400" fill="#1a1a1a" text-anchor="end" transform="translate(102.3,0) scale(0.95,1) translate(-102.3,0)">693087</text><text x="158.7" y="371.2" font-size="9.2" font-weight="400" fill="#1a1a1a" text-anchor="end" transform="translate(158.7,0) scale(0.93,1) translate(-158.7,0)">3/5/2015</text><text x="212" y="371.2" font-size="9.2" font-weight="400" fill="#1a1a1a" text-anchor="end" transform="translate(212,0) scale(0.935,1) translate(-212,0)">7:49:53 AM</text><text x="217.8" y="371.2" font-size="9.2" font-weight="400" fill="#1a1a1a" text-anchor="start" textLength="68.6" lengthAdjust="spacingAndGlyphs" >Lobby POS [3555]</text><text x="322.9" y="371.2" font-size="9.2" font-weight="400" fill="#1a1a1a" text-anchor="start" transform="translate(322.9,0) scale(0.93,1) translate(-322.9,0)">286285</text><text x="479.8" y="371.2" font-size="9.2" font-weight="400" fill="#1a1a1a" text-anchor="end" transform="translate(479.8,0) scale(0.955,1) translate(-479.8,0)">$39.60</text><text x="529.7" y="371.2" font-size="9.2" font-weight="400" fill="#1a1a1a" text-anchor="end" transform="translate(529.7,0) scale(0.955,1) translate(-529.7,0)">$0.00</text><text x="590.5" y="371.2" font-size="9.2" font-weight="400" fill="#1a1a1a" text-anchor="end" transform="translate(590.5,0) scale(0.955,1) translate(-590.5,0)">$39.60</text><text x="644.5" y="371.2" font-size="9.2" font-weight="400" fill="#1a1a1a" text-anchor="end" transform="translate(644.5,0) scale(0.955,1) translate(-644.5,0)">$39.60</text><rect x="27" y="377.8" width="619.5" height="1" fill="#dcdcdc" /><text x="102.3" y="390.5" font-size="9.2" font-weight="400" fill="#1a1a1a" text-anchor="end" transform="translate(102.3,0) scale(0.95,1) translate(-102.3,0)">693088</text><text x="158.7" y="390.5" font-size="9.2" font-weight="400" fill="#1a1a1a" text-anchor="end" transform="translate(158.7,0) scale(0.93,1) translate(-158.7,0)">3/5/2015</text><text x="212" y="390.5" font-size="9.2" font-weight="400" fill="#1a1a1a" text-anchor="end" transform="translate(212,0) scale(0.935,1) translate(-212,0)">7:50:25 AM</text><text x="217.8" y="390.5" font-size="9.2" font-weight="400" fill="#1a1a1a" text-anchor="start" textLength="68.6" lengthAdjust="spacingAndGlyphs" >Lobby POS [3555]</text><text x="322.9" y="390.5" font-size="9.2" font-weight="400" fill="#1a1a1a" text-anchor="start" transform="translate(322.9,0) scale(0.93,1) translate(-322.9,0)">286285</text><text x="479.8" y="390.5" font-size="9.2" font-weight="400" fill="#1a1a1a" text-anchor="end" transform="translate(479.8,0) scale(0.955,1) translate(-479.8,0)">$13.20</text><text x="529.7" y="390.5" font-size="9.2" font-weight="400" fill="#1a1a1a" text-anchor="end" transform="translate(529.7,0) scale(0.955,1) translate(-529.7,0)">$0.00</text><text x="590.5" y="390.5" font-size="9.2" font-weight="400" fill="#1a1a1a" text-anchor="end" transform="translate(590.5,0) scale(0.955,1) translate(-590.5,0)">$13.20</text><text x="644.5" y="390.5" font-size="9.2" font-weight="400" fill="#1a1a1a" text-anchor="end" transform="translate(644.5,0) scale(0.955,1) translate(-644.5,0)">$13.20</text><rect x="27" y="396.5" width="619.5" height="1" fill="#dcdcdc" /><text x="102.3" y="409.2" font-size="9.2" font-weight="400" fill="#1a1a1a" text-anchor="end" transform="translate(102.3,0) scale(0.95,1) translate(-102.3,0)">693089</text><text x="158.7" y="409.2" font-size="9.2" font-weight="400" fill="#1a1a1a" text-anchor="end" transform="translate(158.7,0) scale(0.93,1) translate(-158.7,0)">3/5/2015</text><text x="212" y="409.2" font-size="9.2" font-weight="400" fill="#1a1a1a" text-anchor="end" transform="translate(212,0) scale(0.935,1) translate(-212,0)">7:51:15 AM</text><text x="217.8" y="409.2" font-size="9.2" font-weight="400" fill="#1a1a1a" text-anchor="start" textLength="68.6" lengthAdjust="spacingAndGlyphs" >Lobby POS [3555]</text><text x="322.9" y="409.2" font-size="9.2" font-weight="400" fill="#1a1a1a" text-anchor="start" transform="translate(322.9,0) scale(0.93,1) translate(-322.9,0)">286285</text><text x="479.8" y="409.2" font-size="9.2" font-weight="400" fill="#1a1a1a" text-anchor="end" transform="translate(479.8,0) scale(0.955,1) translate(-479.8,0)">$37.72</text><text x="529.7" y="409.2" font-size="9.2" font-weight="400" fill="#1a1a1a" text-anchor="end" transform="translate(529.7,0) scale(0.955,1) translate(-529.7,0)">$0.00</text><text x="590.5" y="409.2" font-size="9.2" font-weight="400" fill="#1a1a1a" text-anchor="end" transform="translate(590.5,0) scale(0.955,1) translate(-590.5,0)">$37.72</text><text x="644.5" y="409.2" font-size="9.2" font-weight="400" fill="#1a1a1a" text-anchor="end" transform="translate(644.5,0) scale(0.955,1) translate(-644.5,0)">$37.72</text><rect x="27" y="415.7" width="619.5" height="1" fill="#dcdcdc" /><rect x="26.5" y="320.5" width="1" height="96" fill="#dcdcdc" /><rect x="104.5" y="320.5" width="1" height="96" fill="#dcdcdc" /><rect x="161.5" y="320.5" width="1" height="96" fill="#dcdcdc" /><rect x="214.5" y="320.5" width="1" height="96" fill="#dcdcdc" /><rect x="319.5" y="320.5" width="1" height="96" fill="#dcdcdc" /><rect x="375.0" y="320.5" width="1" height="96" fill="#dcdcdc" /><rect x="433.5" y="320.5" width="1" height="96" fill="#dcdcdc" /><rect x="482.0" y="320.5" width="1" height="96" fill="#dcdcdc" /><rect x="532.5" y="320.5" width="1" height="96" fill="#dcdcdc" /><rect x="592.5" y="320.5" width="1" height="96" fill="#dcdcdc" /><rect x="646.0" y="320.5" width="1" height="96" fill="#dcdcdc" /><rect x="647.5" y="175" width="12.5" height="243" fill="#eeeeee" /><rect x="647.5" y="175" width="1" height="243" fill="#d8d8d8" /><path d="M650.5 186 L653.8 182.5 L657 186 Z" fill="#444"/><rect x="649.5" y="190" width="8.5" height="198" rx="1.5" fill="url(#scrollthumbV)" stroke="#a8a8a8" stroke-width="0.8"/><rect x="651" y="285" width="5" height="1" fill="#4a4a4a" /><rect x="651" y="287" width="5" height="1" fill="#4a4a4a" /><rect x="651" y="289" width="5" height="1" fill="#4a4a4a" /><path d="M650.5 409 L653.8 412.5 L657 409 Z" fill="#444"/><rect x="13.5" y="418" width="634" height="12.5" fill="#eeeeee" /><path d="M23 421 L19.5 424 L23 427 Z" fill="#444"/><rect x="28.5" y="419.5" width="597" height="9" rx="1.5" fill="url(#scrollthumbH)" stroke="#a8a8a8" stroke-width="0.8"/><rect x="324" y="422" width="1" height="5" fill="#4a4a4a" /><rect x="326" y="422" width="1" height="5" fill="#4a4a4a" /><rect x="328" y="422" width="1" height="5" fill="#4a4a4a" /><path d="M638 421 L641.5 424 L638 427 Z" fill="#444"/><rect x="647.5" y="418" width="12.5" height="12.5" fill="#efefef" /><rect x="662" y="57" width="19" height="392" fill="#646496" /><rect x="685" y="58" width="171" height="389" fill="#273571" /><rect x="685" y="58" width="171" height="1" fill="#d07030" /><rect x="689.5" y="61" width="161" height="32" rx="7" fill="none" stroke="#4c5eae" stroke-width="1.5"/><text x="695.5" y="80.6" font-size="13" font-weight="700" fill="#e2e2ea" text-anchor="start" textLength="41" lengthAdjust="spacingAndGlyphs" >Search</text><rect x="701.8" y="132.3" width="146.5" height="29.5" rx="5.5" fill="url(#dkb)" stroke="#4058b0" stroke-width="1.8"/><rect x="707.5" y="137.5" width="135" height="19" rx="2" fill="none" stroke="#555" stroke-width="0.8" opacity="0.7"/><text x="741" y="149.7" font-size="10.5" font-weight="700" fill="#f2f2f2" text-anchor="start" textLength="49" lengthAdjust="spacingAndGlyphs" >Shift Detail</text><rect x="701.8" y="166.60000000000002" width="146.5" height="29.5" rx="5.5" fill="url(#dkb)" stroke="#4058b0" stroke-width="1.8"/><rect x="707.5" y="171.8" width="135" height="19" rx="2" fill="none" stroke="#555" stroke-width="0.8" opacity="0.7"/><text x="740" y="184.0" font-size="10.5" font-weight="700" fill="#f2f2f2" text-anchor="start" textLength="103" lengthAdjust="spacingAndGlyphs" >Credit Cards Summary</text><rect x="701.8" y="201.3" width="146.5" height="29.5" rx="5.5" fill="url(#dkb)" stroke="#4058b0" stroke-width="1.8"/><rect x="707.5" y="206.5" width="135" height="19" rx="2" fill="none" stroke="#555" stroke-width="0.8" opacity="0.7"/><text x="740" y="218.7" font-size="10.5" font-weight="700" fill="#f2f2f2" text-anchor="start" textLength="61" lengthAdjust="spacingAndGlyphs" >Credit Cards</text><rect x="701.8" y="236.0" width="146.5" height="29.5" rx="5.5" fill="url(#dkb)" stroke="#4058b0" stroke-width="1.8"/><rect x="707.5" y="241.2" width="135" height="19" rx="2" fill="none" stroke="#555" stroke-width="0.8" opacity="0.7"/><text x="740" y="253.39999999999998" font-size="10.5" font-weight="700" fill="#f2f2f2" text-anchor="start" textLength="46" lengthAdjust="spacingAndGlyphs" >Gift Cards</text><rect x="701.8" y="270.8" width="146.5" height="29.5" rx="5.5" fill="url(#dkb)" stroke="#4058b0" stroke-width="1.8"/><rect x="707.5" y="276" width="135" height="19" rx="2" fill="none" stroke="#555" stroke-width="0.8" opacity="0.7"/><text x="740" y="288.2" font-size="10.5" font-weight="700" fill="#f2f2f2" text-anchor="start" textLength="34" lengthAdjust="spacingAndGlyphs" >Checks</text><rect x="701.8" y="305.8" width="146.5" height="29.5" rx="5.5" fill="url(#dkb)" stroke="#4058b0" stroke-width="1.8"/><rect x="707.5" y="311" width="135" height="19" rx="2" fill="none" stroke="#555" stroke-width="0.8" opacity="0.7"/><text x="740" y="323.2" font-size="10.5" font-weight="700" fill="#f2f2f2" text-anchor="start" textLength="60" lengthAdjust="spacingAndGlyphs" >Fleet Activity</text><rect x="701.8" y="340.8" width="146.5" height="29.5" rx="5.5" fill="url(#dkb)" stroke="#4058b0" stroke-width="1.8"/><rect x="707.5" y="346" width="135" height="19" rx="2" fill="none" stroke="#555" stroke-width="0.8" opacity="0.7"/><text x="740" y="358.2" font-size="10.5" font-weight="700" fill="#f2f2f2" text-anchor="start" textLength="41" lengthAdjust="spacingAndGlyphs" >Deposits</text><rect x="701.8" y="375.8" width="146.5" height="29.5" rx="5.5" fill="url(#dkb)" stroke="#4058b0" stroke-width="1.8"/><rect x="707.5" y="381" width="135" height="19" rx="2" fill="none" stroke="#555" stroke-width="0.8" opacity="0.7"/><text x="740" y="393.2" font-size="10.5" font-weight="700" fill="#f2f2f2" text-anchor="start" textLength="48" lengthAdjust="spacingAndGlyphs" >Free Wash</text><rect x="701.8" y="410.6" width="146.5" height="29.5" rx="5.5" fill="url(#dkb)" stroke="#4058b0" stroke-width="1.8"/><rect x="707.5" y="415.8" width="135" height="19" rx="2" fill="none" stroke="#555" stroke-width="0.8" opacity="0.7"/><text x="740" y="428.0" font-size="10.5" font-weight="700" fill="#f2f2f2" text-anchor="start" textLength="10" lengthAdjust="spacingAndGlyphs" ></text><path d="M715.3 146.5 L725 140 L735.5 145.5 L727 152.5 Z" fill="#181818" transform="translate(0.8,1.2)"/><path d="M715.3 146.5 L725 140 L735 145.5 L727 152.5 Z" fill="#f2f2f2" stroke="#9a9a9a" stroke-width="0.5"/><path d="M720 143.3 L731 149" stroke="#b8b8b8" stroke-width="0.6"/><rect x="716.5" y="175.0" width="18.5" height="12" rx="0.8" fill="#f4f6fa" stroke="#222" stroke-width="0.6"/><rect x="716.5" y="177.8" width="18.5" height="2.2" fill="#2a2a2a"/><rect x="717.2" y="180.7" width="17" height="5.6" fill="#d4dae6"/><rect x="716.5" y="210.0" width="18.5" height="12" rx="0.8" fill="#f4f6fa" stroke="#222" stroke-width="0.6"/><rect x="716.5" y="212.8" width="18.5" height="2.2" fill="#2a2a2a"/><rect x="717.2" y="215.7" width="17" height="5.6" fill="#d4dae6"/><rect x="713.5" y="244.7" width="21.2" height="11.6" fill="#a8a8a8" stroke="#333" stroke-width="0.5"/><path d="M724 244.7 V256.3 M715.5 247 L724 250.5 L732.5 247 M718.5 254 L724 250.5 L729.5 254" stroke="#f8f8f8" stroke-width="1.5" fill="none"/><path d="M713.5 250 H734.7" stroke="#f0f0f0" stroke-width="1.2"/><rect x="711" y="280" width="23.7" height="10.5" fill="#d8f0f8" stroke="#889aa8" stroke-width="0.5"/><path d="M713.5 287.5 H724 M726 284 H731" stroke="#9ab0c0" stroke-width="0.6"/><path d="M710 325.7 V322.5 Q710 321.2 711.5 321 L713.3 319.5 H716.5 L718 321 Q719 321 719.3 322 L720.6 320.8 Q721 319.5 722.3 319.5 H723.6 L725 321.2 V325.7 Z" fill="#f6f6f6"/><circle cx="712.5" cy="325.9" r="1.1" fill="#3a3a3a"/><circle cx="717.3" cy="325.9" r="1.1" fill="#3a3a3a"/><circle cx="722" cy="325.9" r="1.1" fill="#3a3a3a"/><rect x="726" y="318" width="2.3" height="8" fill="#f6f6f6"/><rect x="729.4" y="315.2" width="2.1" height="10.8" fill="#f6f6f6"/><rect x="733" y="315.2" width="2" height="10.8" fill="#f6f6f6"/><rect x="720.1" y="351.1" width="5.6" height="1.9" fill="#f6f6f6"/><path d="M722.2 353 V354.5" stroke="#f6f6f6" stroke-width="1"/><rect x="720" y="354.5" width="11" height="3.6" fill="#f6f6f6"/><rect x="721.5" y="355.6" width="3.5" height="1.3" fill="#222"/><rect x="719" y="358" width="13.5" height="3" fill="#f6f6f6"/><path d="M731.2 354 H735.5 M733.35 351.8 V356.2" stroke="#f6f6f6" stroke-width="1.6"/><path d="M711.8 394 V390 Q711.8 388.6 713.5 388.2 L715 387 H721.6 L723.2 388.2 Q724.9 388.6 724.9 390 V394 Z" fill="#f6f6f6"/><circle cx="714.3" cy="390.6" r="0.9" fill="#555"/><circle cx="722.4" cy="390.6" r="0.9" fill="#555"/><rect x="716.5" y="392.3" width="3.6" height="0.8" fill="#777"/><text x="725.5" y="394.3" font-size="10" font-weight="400" fill="#f6f6f6" text-anchor="start" textLength="10.5" lengthAdjust="spacingAndGlyphs" >$0</text><rect x="690.5" y="99.5" width="160" height="33.5" rx="7" fill="url(#graybtn)" stroke="#4a5cb0" stroke-width="1.6"/><path d="M752.8 126.1 L760.9 126.1 L769.5 117.1 L777.5 126.1 L786.1 126.1 L773.1 110 L766.2 110 Z" fill="#4858a8" stroke="#dcd8cc" stroke-width="0.7"/><rect x="690" y="412.5" width="160" height="34" rx="7" fill="url(#graybtn)" stroke="#4a5cb0" stroke-width="1.6"/><path d="M752.8 423.9 L760.9 423.9 L769.5 432.9 L777.5 423.9 L786.1 423.9 L773.1 440 L766.2 440 Z" fill="#4858a8" stroke="#dcd8cc" stroke-width="0.7"/><rect x="683" y="56" width="175" height="393" fill="none" stroke="#ff0000" stroke-width="4"/><rect x="660.5" y="199.5" width="23" height="110" fill="none" stroke="#ff0000" stroke-width="5"/><rect x="663" y="202" width="18" height="105" fill="#6a6a9c" /><path d="M663.5 213 Q663.5 203 668 202.5" stroke="#c87a3a" stroke-width="0.9" fill="none"/><path d="M663.5 296 Q663.5 306 668 306.5" stroke="#c87a3a" stroke-width="0.9" fill="none"/><path d="M669.5 214 L678 219.5 L669.5 225 Z" fill="#10e010" stroke="#0a3a0a" stroke-width="0.8"/><path d="M669.5 285 L678 290.5 L669.5 296 Z" fill="#10e010" stroke="#0a3a0a" stroke-width="0.8"/><text x="0" y="0" font-size="14" fill="#fff" textLength="35" lengthAdjust="spacingAndGlyphs" transform="translate(678,272) rotate(-90)">Menu</text></svg></body></html>
